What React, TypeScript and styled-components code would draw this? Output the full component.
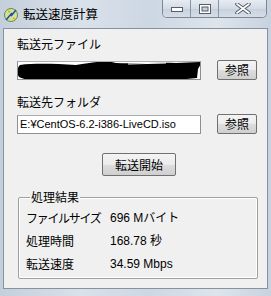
import styled, { createGlobalStyle } from "styled-components";

const GlobalStyle = createGlobalStyle`
	html, body {
		margin: 0;
		padding: 0;
		background: #ffffff;
	}
`;

const Window = styled.div`
	width: 271px;
	height: 296px;
	box-sizing: border-box;
	display: flex;
	flex-direction: column;
	background: linear-gradient(90deg, #c4cfdc 0%, #d9e1ea 30%, #cdd7e3 55%, #dde4ec 80%, #c8d2de 100%);
	font-family: "Noto Sans CJK JP", "Liberation Sans", sans-serif;
	color: #000;
	overflow: hidden;
`;

const TitleBar = styled.div`
	height: 28px;
	display: flex;
	align-items: flex-start;
	padding-left: 3px;
	flex-shrink: 0;
`;

const TitleIcon = styled.svg`
	width: 16px;
	height: 16px;
	margin-top: 7px;
`;

const TitleText = styled.span`
	margin-left: 4px;
	margin-top: 6px;
	font-size: 12.5px;
	line-height: 16px;
	color: #000;
`;

const CaptionGroup = styled.div`
	margin-left: auto;
	margin-right: 4px;
	display: flex;
	height: 18px;
	border: 1px solid #7d8794;
	border-top: none;
	border-radius: 0 0 5px 5px;
	overflow: hidden;
	box-sizing: border-box;
`;

const CaptionButton = styled.div<{ $w: number; $last?: boolean }>`
	width: ${(p) => p.$w}px;
	height: 100%;
	display: flex;
	align-items: center;
	justify-content: center;
	background: linear-gradient(180deg, #e7ecf2 0%, #d3dbe5 50%, #c6d0dc 51%, #d6dee8 100%);
	border-right: ${(p) => (p.$last ? "none" : "1px solid #8a95a3")};
	box-sizing: border-box;
`;

const Client = styled.div`
	flex: 1;
	margin: 0 3px 7px 3px;
	border: 1px solid #8592a1;
	background: #f0f0f0;
	padding: 0 0 0 13px;
	display: flex;
	flex-direction: column;
	align-items: flex-start;
`;

const Label = styled.div<{ $top: number }>`
	margin-top: ${(p) => p.$top}px;
	font-size: 12px;
	line-height: 14px;
	height: 14px;
`;

const FieldRow = styled.div<{ $top: number }>`
	margin-top: ${(p) => p.$top}px;
	display: flex;
	align-items: center;
	width: 240px;
`;

const TextBox = styled.div`
	position: relative;
	width: 184px;
	height: 19px;
	box-sizing: border-box;
	border: 1px solid #8e8f8f;
	border-top-color: #abadb3;
	background: #fff;
	font-family: "Liberation Sans", "Noto Sans CJK JP", sans-serif;
	font-size: 11px;
	line-height: 17px;
	padding-left: 2px;
	white-space: nowrap;
	overflow: hidden;
`;

const Redaction = styled.svg`
	position: absolute;
	left: -2px;
	top: -3px;
	width: 188px;
	height: 24px;
`;

const Button = styled.div<{ $w: number; $h: number }>`
	width: ${(p) => p.$w}px;
	height: ${(p) => p.$h}px;
	box-sizing: border-box;
	display: flex;
	align-items: center;
	justify-content: center;
	background: linear-gradient(180deg, #f4f4f4 0%, #ebebeb 50%, #dddddd 51%, #cfcfcf 100%);
	border: 1px solid #707070;
	border-radius: 2px;
	font-size: 12px;
	line-height: 14px;
`;

const BrowseButton = styled(Button)`
	margin-left: auto;
`;

const StartButton = styled(Button)`
	margin-top: 19px;
	margin-left: 85px;
`;

const GroupBox = styled.fieldset`
	margin: 14px 0 0 1px;
	width: 240px;
	height: 89px;
	box-sizing: border-box;
	border: 1px solid #a0a0a0;
	box-shadow: inset 0 0 0 1px #fff;
	border-radius: 2px;
	padding: 7px 0 0 7px;
	display: flex;
	flex-direction: column;
	gap: 9px;
`;

const Legend = styled.legend`
	font-size: 12px;
	line-height: 14px;
	padding: 0 1px;
	margin-left: 4px;
`;

const ResultRow = styled.div`
	display: grid;
	grid-template-columns: 84px auto;
	font-size: 12px;
	line-height: 14px;
`;

const RowLabel = styled.span<{ $tight?: boolean }>`
	letter-spacing: ${(p) => (p.$tight ? "-1.3px" : "0")};
	white-space: nowrap;
`;

const Value = styled.span`
	font-family: "Liberation Sans", "Noto Sans CJK JP", sans-serif;
	font-size: 12px;
`;

const results = [
	{ label: "ファイルサイズ", value: "696 Mバイト", tight: true },
	{ label: "処理時間", value: "168.78 秒" },
	{ label: "転送速度", value: "34.59 Mbps" },
];

const App = () => {
	return (
		<>
			<GlobalStyle />
			<Window>
				<TitleBar>
					<TitleIcon viewBox="0 0 16 16">
						<circle cx="8" cy="8" r="6.5" fill="#cfe3a0" stroke="#6a8a3a" strokeWidth="1" />
						<path d="M3 13 L9 6 L8 9 L13 3" stroke="#2a4f9a" strokeWidth="1.6" fill="none" />
						<path d="M5 4 L7 5 M10 11 L12 12" stroke="#e0b000" strokeWidth="1.4" />
					</TitleIcon>
					<TitleText>転送速度計算</TitleText>
					<CaptionGroup>
						<CaptionButton $w={28}>
							<svg width="12" height="6" viewBox="0 0 12 6">
								<rect x="0.5" y="1.5" width="11" height="4" fill="#fff" stroke="#555d68" />
							</svg>
						</CaptionButton>
						<CaptionButton $w={28}>
							<svg width="12" height="10" viewBox="0 0 12 10">
								<rect x="0.5" y="0.5" width="11" height="9" fill="#fff" stroke="#555d68" />
								<rect x="3" y="3" width="6" height="4" fill="#c8d0da" stroke="#555d68" strokeWidth="1" />
							</svg>
						</CaptionButton>
						<CaptionButton $w={47} $last>
							<svg width="16" height="11" viewBox="0 0 16 11">
								<path d="M2 1 L14 10 M14 1 L2 10" stroke="#555d68" strokeWidth="3.6" strokeLinecap="round" />
								<path d="M2 1 L14 10 M14 1 L2 10" stroke="#fff" strokeWidth="1.6" strokeLinecap="round" />
							</svg>
						</CaptionButton>
					</CaptionGroup>
				</TitleBar>
				<Client>
					<Label $top={8}>転送元ファイル</Label>
					<FieldRow $top={9}>
						<TextBox>
							<Redaction viewBox="0 0 188 24" preserveAspectRatio="none">
								<path
									d="M4 6 C20 4 40 5 60 6 C80 3 90 1 100 4 C120 5 140 3 160 4 L186 3 L182 10 L181 19 L160 21 C140 20 120 23 110 21 C90 22 60 20 40 21 C20 22 8 21 3 18 C0 14 1 9 4 6 Z"
									fill="#000"
								/>
								<path d="M112 5 L150 4" stroke="#fff" strokeWidth="1" />
							</Redaction>
						</TextBox>
						<BrowseButton $w={40} $h={20}>参照</BrowseButton>
					</FieldRow>
					<Label $top={15}>転送先フォルダ</Label>
					<FieldRow $top={5}>
						<TextBox>E:¥CentOS-6.2-i386-LiveCD.iso</TextBox>
						<BrowseButton $w={40} $h={20}>参照</BrowseButton>
					</FieldRow>
					<StartButton $w={74} $h={23}>転送開始</StartButton>
					<GroupBox>
						<Legend>処理結果</Legend>
						{results.map((r) => (
							<ResultRow key={r.label}>
								<RowLabel $tight={r.tight}>{r.label}</RowLabel>
								<Value>{r.value}</Value>
							</ResultRow>
						))}
					</GroupBox>
				</Client>
			</Window>
		</>
	);
};

export default App;
